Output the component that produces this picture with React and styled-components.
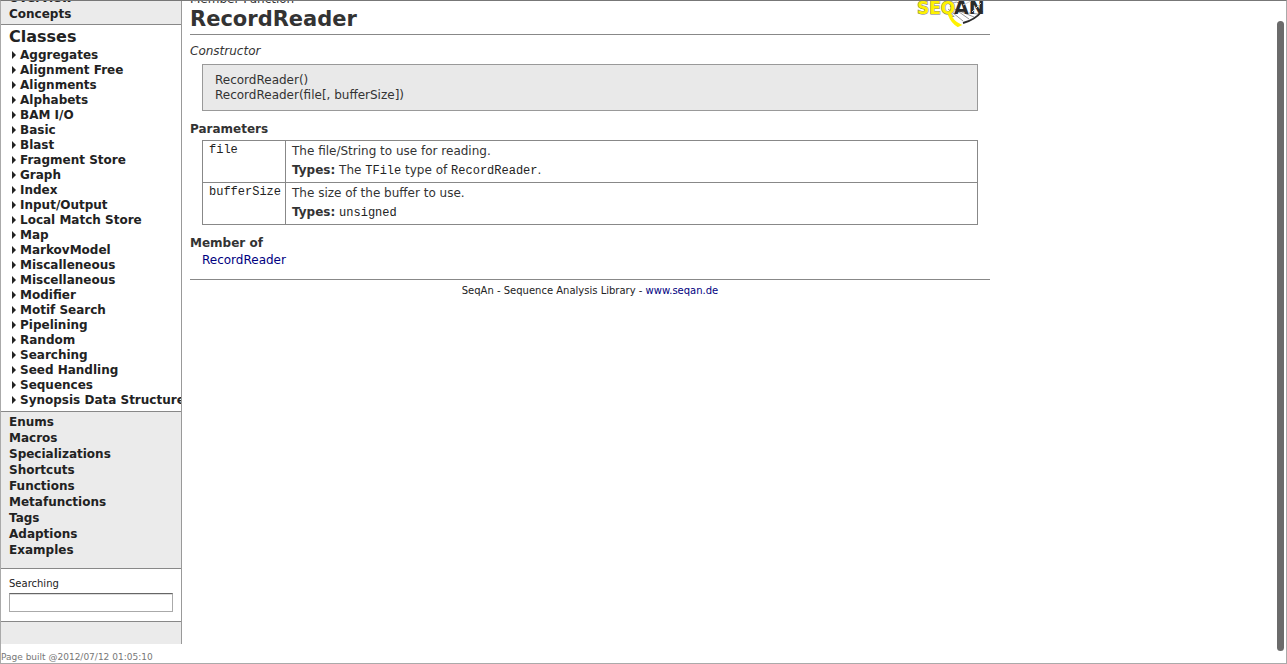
import React from "react";
import styled, { createGlobalStyle } from "styled-components";

const sans = `Verdana, "DejaVu Sans", sans-serif`;
const mono = `"Courier New", "Liberation Mono", monospace`;
const line = "#888";

const GlobalStyle = createGlobalStyle`
  * { box-sizing: border-box; }
  body { margin: 0; background: #fff; color: #333; font: 12px/15px ${sans}; }
  a { color: #000080; text-decoration: none; }
  ul { list-style: none; margin: 0; padding: 0; }
`;

const Frame = styled.div`
  position: relative;
  min-height: 100vh;
  border: 1px solid #aaa;
  border-top-color: #777;
  overflow: hidden;
  display: flex;
  align-items: flex-start;
`;

const Sidebar = styled.aside`
  flex: 0 0 181px;
  min-width: 0;
`;

const Nav = styled.nav`
  border-right: 1px solid #999;
  background: #ebebeb;
  overflow: hidden;
`;

const Section = styled.div`
  padding: ${(p) => p.$pad || "0"};
  background: ${(p) => (p.$open ? "#fff" : "#ebebeb")};
  border-bottom: 1px solid ${line};
`;

const Clipped = styled.div`
  display: flex;
  align-items: flex-end;
  height: ${(p) => p.$height};
  line-height: 12px;
  overflow: hidden;
`;

const NavLink = styled.a`
  display: block;
  color: #222;
  font-size: 12px;
  font-weight: bold;
  line-height: 16px;
  white-space: nowrap;
`;

const NavTitle = styled.h2`
  margin: 0;
  color: #222;
  font-size: 16px;
  line-height: 23px;
`;

const TreeLink = styled(NavLink)`
  display: flex;
  align-items: center;
  gap: 4px;
  padding-left: 3px;
  line-height: 15px;
  &::before {
    content: "";
    margin-bottom: 2px;
    border: 4px solid transparent;
    border-left-color: #222;
    border-right: 0;
  }
`;

const Search = styled.form`
  display: flex;
  flex-direction: column;
  gap: 2px;
`;

const SearchLabel = styled.label`
  color: #222;
  font-size: 10px;
  line-height: 14px;
`;

const SearchInput = styled.input`
  width: 100%;
  height: 19px;
  margin: 0;
  padding: 1px 3px;
  border: 1px solid #aaa;
  border-top-color: #666;
  background: #fff;
  box-shadow: inset 0 1px 0 #ddd;
  font: 11px ${sans};
  outline: none;
`;

const NavEnd = styled.div`
  height: 22px;
`;

const BuildNote = styled.p`
  margin: 8px 0 0;
  color: #777;
  font-size: 9px;
  line-height: 11px;
  white-space: nowrap;
`;

const Main = styled.main`
  flex: 0 1 800px;
  min-width: 0;
  margin-left: 8px;
`;

const Header = styled.header`
  display: flex;
  justify-content: space-between;
  align-items: flex-start;
  height: 34px;
  border-bottom: 1px solid ${line};
`;

const Title = styled.h1`
  margin: 0;
  font-size: 21px;
  line-height: 28px;
`;

const Logo = styled.svg`
  display: block;
  width: 70px;
  height: 27px;
  margin-right: 3px;
`;

const Kind = styled.p`
  margin: 9px 0 5px;
  font-style: italic;
`;

const Signature = styled.div`
  margin: 0 12px;
  padding: 8px 12px 7px;
  border: 1px solid #999;
  background: #e9e9e9;
`;

const Heading = styled.h3`
  margin: 11px 0 ${(p) => (p.$tight ? "2px" : "3px")};
  font-size: 12px;
  line-height: 15px;
`;

const TableWrap = styled.div`
  padding: 0 12px;
`;

const Params = styled.table`
  width: 100%;
  border-collapse: collapse;
`;

const Cell = styled.td`
  height: 42px;
  padding: 1px 6px 2px;
  border: 1px solid ${line};
  vertical-align: top;
`;

const NameCell = styled(Cell).attrs({ as: "th", scope: "row" })`
  width: 83px;
  padding-right: 4px;
  text-align: left;
  font-weight: normal;
`;

const Code = styled.code`
  color: #222;
  font-family: ${mono};
  font-size: 12px;
  line-height: 12px;
`;

const Line = styled.p`
  margin: 0;
  line-height: 19px;
`;

const Members = styled.div`
  padding: 0 12px 11px;
  border-bottom: 1px solid ${line};
`;

const Footer = styled.footer`
  padding-top: 4px;
  text-align: center;
  font-size: 10px;
  line-height: 14px;
  color: #222;
`;

const ScrollThumb = styled.div`
  position: absolute;
  top: 20px;
  right: 2px;
  bottom: 12px;
  width: 7px;
  border-radius: 4px;
  background: #6b6b6b;
`;

const classes = [
  "Aggregates", "Alignment Free", "Alignments", "Alphabets", "BAM I/O", "Basic",
  "Blast", "Fragment Store", "Graph", "Index", "Input/Output", "Local Match Store",
  "Map", "MarkovModel", "Miscalleneous", "Miscellaneous", "Modifier", "Motif Search",
  "Pipelining", "Random", "Searching", "Seed Handling", "Sequences",
  "Synopsis Data Structures",
];

const sections = [
  "Enums", "Macros", "Specializations", "Shortcuts", "Functions", "Metafunctions",
  "Tags", "Adaptions", "Examples",
];

function SeqAnLogo() {
  return (
    <Logo viewBox="0 0 70 27" role="img" aria-label="SeqAn">
      <g fill="none" stroke="#999" strokeWidth="1">
        <path d="M31 8L46 20M35 6L52 18M40 9L57 16M52 12L61 13" />
        <path d="M33 6Q37 -1 42 2" />
      </g>
      <g fontFamily="DejaVu Sans, sans-serif" fontWeight="bold">
        <text x="0" y="13" fontSize="17" fill="#fff200" stroke="#777" strokeWidth="1" paintOrder="stroke">SEQ</text>
        <text x="37" y="13" fontSize="19" fill="#2b2b2b">AN</text>
      </g>
      <path d="M33 13Q35 20 43 24L41 25Q35 22 32 14Z" fill="#fff200" stroke="#fff200" strokeWidth="2" />
      <path d="M46 22Q58 19 65 10" fill="none" stroke="#2b2b2b" strokeWidth="2" />
      <path d="M46 4L54 0M55 11L64 2" fill="none" stroke="#ccc" strokeWidth="1" />
    </Logo>
  );
}

export default function App() {
  return (
    <>
      <GlobalStyle />
      <Frame>
        <Sidebar>
          <Nav>
            <Section $pad="0 8px 2px">
              <Clipped $height="5px"><NavLink href="#">Overview</NavLink></Clipped>
              <NavLink href="#">Concepts</NavLink>
            </Section>
            <Section $open $pad="0 0 3px 8px">
              <NavTitle>Classes</NavTitle>
              <ul>
                {classes.map((name) => (
                  <li key={name}><TreeLink href="#">{name}</TreeLink></li>
                ))}
              </ul>
            </Section>
            <Section $pad="2px 8px 10px">
              <ul>
                {sections.map((name) => (
                  <li key={name}><NavLink href="#">{name}</NavLink></li>
                ))}
              </ul>
            </Section>
            <Section $open $pad="8px 8px 9px">
              <Search>
                <SearchLabel htmlFor="search">Searching</SearchLabel>
                <SearchInput id="search" type="text" />
              </Search>
            </Section>
            <NavEnd />
          </Nav>
          <BuildNote>Page built @2012/07/12 01:05:10</BuildNote>
        </Sidebar>
        <Main>
          <Header>
            <div>
              <Clipped $height="4px">Member Function</Clipped>
              <Title>RecordReader</Title>
            </div>
            <SeqAnLogo />
          </Header>
          <Kind>Constructor</Kind>
          <Signature>
            <div>RecordReader()</div>
            <div>RecordReader(file[, bufferSize])</div>
          </Signature>
          <Heading>Parameters</Heading>
          <TableWrap>
            <Params>
              <tbody>
                <tr>
                  <NameCell><Code>file</Code></NameCell>
                  <Cell>
                    <Line>The file/String to use for reading.</Line>
                    <Line><b>Types:</b> The <Code>TFile</Code> type of <Code>RecordReader</Code>.</Line>
                  </Cell>
                </tr>
                <tr>
                  <NameCell><Code>bufferSize</Code></NameCell>
                  <Cell>
                    <Line>The size of the buffer to use.</Line>
                    <Line><b>Types:</b> <Code>unsigned</Code></Line>
                  </Cell>
                </tr>
              </tbody>
            </Params>
          </TableWrap>
          <Heading $tight>Member of</Heading>
          <Members><a href="#">RecordReader</a></Members>
          <Footer>SeqAn - Sequence Analysis Library - <a href="#">www.seqan.de</a></Footer>
        </Main>
        <ScrollThumb />
      </Frame>
    </>
  );
}
